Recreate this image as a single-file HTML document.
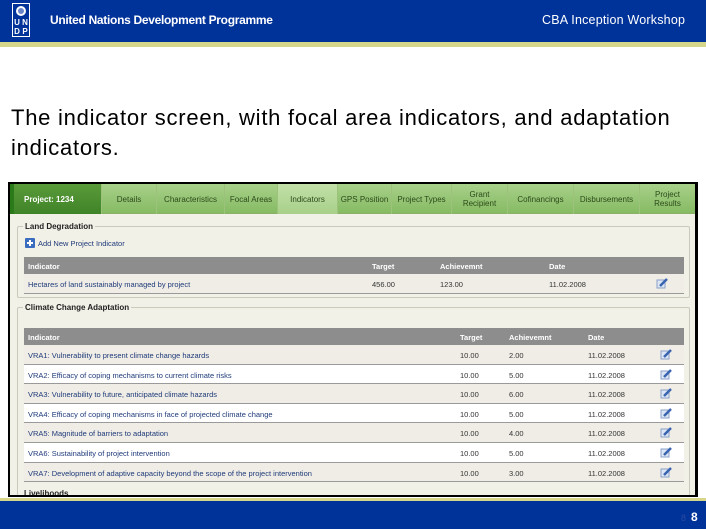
<!DOCTYPE html>
<html><head><meta charset="utf-8"><style>
*{margin:0;padding:0;box-sizing:border-box}
body{width:706px;height:529px;position:relative;background:#fff;font-family:"Liberation Sans",sans-serif;overflow:hidden}
.a{position:absolute}
.hdr{left:0;top:0;width:706px;height:42px;background:#003399}
.yl{left:0;top:42px;width:706px;height:5px;background:#d6d68a}
.logo{left:12px;top:3px;width:18px;height:34px;border:1px solid #fff}
.logo .l{position:absolute;color:#fff;font-size:8px;font-weight:bold;width:8px;text-align:center}
.un{left:50px;top:13px;color:#fff;font-size:12px;font-weight:bold;letter-spacing:-0.3px}
.cba{left:542px;top:13px;color:#fff;font-size:12.5px;letter-spacing:0.2px}
.title{left:11px;top:103px;font-size:22px;letter-spacing:0.75px;color:#000;line-height:30px;width:690px}
.shot{left:8px;top:182px;width:690px;height:315px;background:#000;overflow:hidden}
.inner{left:2px;top:2px;width:685px;height:311px;background:#f2f1e7;overflow:hidden}
.tabs{left:0;top:0;width:685px;height:30px;background:linear-gradient(#a8d08a,#86bb63);border-bottom:1px solid #8ab06a}
.tab{position:absolute;top:0;height:30px;font-size:8px;color:#2b4a1a;display:flex;align-items:center;justify-content:center;text-align:center;line-height:9px;border-right:1px solid #9cc27c}
.fs{border:1px solid #c9c9bc;border-radius:2px}
.lg{font-size:8px;font-weight:bold;color:#222;background:#f2f1e7;padding:0 2px}
.th{background:#8d8d8d;color:#fff;font-size:7.5px;font-weight:bold;height:17px}
.row{font-size:7.5px;color:#1f3a7a;height:19.6px;border-bottom:1.5px solid #9a9a9a}
.c{position:absolute;top:5px}
.row .c{color:#333;top:6px}
.row .c.t{color:#1f3a7a}
.ft{left:0;top:498px;width:706px;height:3px;background:#d6d68a}
.fb{left:0;top:501px;width:706px;height:28px;background:#003399}
</style></head><body>
<div class="a hdr"></div><div class="a yl"></div>
<div class="a logo">
<svg width="16" height="14" style="position:absolute;left:0;top:0"><circle cx="8" cy="7" r="5" fill="#fff"/><circle cx="8" cy="7" r="3" fill="#6b86c8"/></svg>
<div class="l" style="left:0;top:14px">U</div><div class="l" style="left:8px;top:14px">N</div>
<div class="l" style="left:0;top:23px">D</div><div class="l" style="left:8px;top:23px">P</div>
</div>
<div class="a un">United Nations Development Programme</div>
<div class="a cba">CBA Inception Workshop</div>
<div class="a title">The indicator screen, with focal area indicators, and adaptation indicators.</div>
<div class="a shot"><div class="a inner">
<div class="a tabs">
<div class="tab" style="left:0;width:92px;background:linear-gradient(#5a9a3a,#3f8428);color:#fff;font-weight:bold;font-size:8px;justify-content:flex-start;padding-left:10px;border-left:4px solid #2a7a1a">Project: 1234</div>
<div class="tab" style="left:92px;width:55px">Details</div>
<div class="tab" style="left:147px;width:68px">Characteristics</div>
<div class="tab" style="left:215px;width:53px">Focal Areas</div>
<div class="tab" style="left:268px;width:60px;background:linear-gradient(#c2e0a8,#a8d08a)">Indicators</div>
<div class="tab" style="left:328px;width:54px">GPS Position</div>
<div class="tab" style="left:382px;width:60px">Project Types</div>
<div class="tab" style="left:442px;width:56px">Grant<br>Recipient</div>
<div class="tab" style="left:498px;width:66px">Cofinancings</div>
<div class="tab" style="left:564px;width:66px">Disbursements</div>
<div class="tab" style="left:630px;width:55px;border:none">Project<br>Results</div>
</div>
<div class="a fs" style="left:7px;top:42px;width:673px;height:72px"></div>
<div class="a lg" style="left:13px;top:38px">Land Degradation</div>
<svg class="a" style="left:15px;top:54px" width="10" height="10"><rect width="10" height="10" rx="1" fill="#3a6cc0"/><path d="M5 2v6M2 5h6" stroke="#fff" stroke-width="2"/></svg>
<div class="a" style="left:28px;top:55px;font-size:7.5px;color:#1f3a7a">Add New Project Indicator</div>
<div class="a th" style="left:14px;top:73px;width:660px"><span class="c" style="left:4px">Indicator</span><span class="c" style="left:348px">Target</span><span class="c" style="left:416px">Achievemnt</span><span class="c" style="left:525px">Date</span></div>
<div class="a row" style="left:14px;top:90px;width:660px;height:20px;background:#efede5"><span class="c t" style="left:4px">Hectares of land sustainably managed by project</span><span class="c" style="left:348px">456.00</span><span class="c" style="left:416px">123.00</span><span class="c" style="left:525px">11.02.2008</span>
<svg class="a" style="left:632px;top:3px" width="12" height="12"><rect x="1" y="3" width="8" height="8" fill="#dde6f4" stroke="#8aa0c8"/><path d="M4 9l7-7" stroke="#3a64b0" stroke-width="2.5"/></svg></div>
<div class="a fs" style="left:7px;top:123px;width:673px;height:200px"></div>
<div class="a lg" style="left:13px;top:119px">Climate Change Adaptation</div>
<div class="a th" style="left:14px;top:144px;width:660px"><span class="c" style="left:4px">Indicator</span><span class="c" style="left:436px">Target</span><span class="c" style="left:485px">Achievemnt</span><span class="c" style="left:564px">Date</span></div>
<div id="rows"></div>
</div></div>
<div class="a ft"></div><div class="a fb"></div>
<div class="a" style="left:681px;top:513px;font-size:9px;color:#2a4aa0">8</div>
<div class="a" style="left:691px;top:510px;font-size:12px;color:#fff;font-weight:bold">8</div>
<script>
var d=[["VRA1: Vulnerability to present climate change hazards","2.00"],["VRA2: Efficacy of coping mechanisms to current climate risks","5.00"],["VRA3: Vulnerability to future, anticipated climate hazards","6.00"],["VRA4: Efficacy of coping mechanisms in face of projected climate change","5.00"],["VRA5: Magnitude of barriers to adaptation","4.00"],["VRA6: Sustainability of project intervention","5.00"],["VRA7: Development of adaptive capacity beyond the scope of the project intervention","3.00"]];
var h="";d.forEach(function(r,i){h+='<div class="a row" style="left:14px;top:'+(161+i*19.6)+'px;width:660px;background:'+(i%2?'#fff':'#efede5')+'"><span class="c t" style="left:4px">'+r[0]+'</span><span class="c" style="left:436px">10.00</span><span class="c" style="left:485px">'+r[1]+'</span><span class="c" style="left:564px">11.02.2008</span><svg class="a" style="left:636px;top:3px" width="12" height="12"><rect x="1" y="3" width="8" height="8" fill="#dde6f4" stroke="#8aa0c8"/><path d="M4 9l7-7" stroke="#3a64b0" stroke-width="2.5"/></svg></div>'});
h+='<div class="a" style="left:14px;top:305px;font-size:8px;font-weight:bold;color:#222">Livelihoods</div>';
document.getElementById("rows").innerHTML=h;
</script>
</body></html>
